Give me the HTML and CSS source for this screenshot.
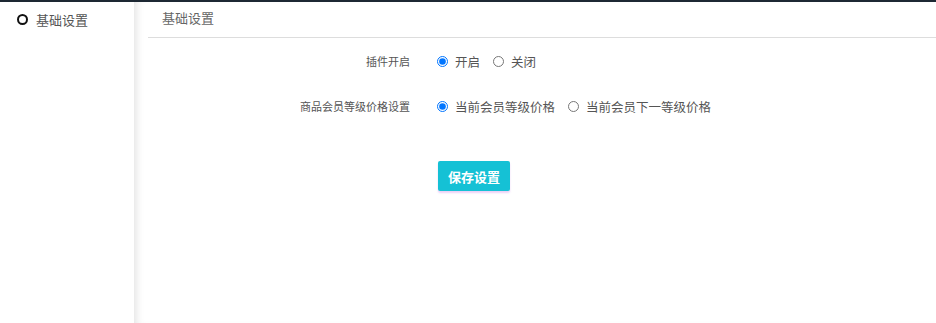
FILE: index.html
```html
<!DOCTYPE html>
<html lang="zh-CN">
<head>
    <meta charset="UTF-8">
    <title>基础设置</title>
    <link rel="stylesheet" href="styles.css">
</head>
<body>
    <div class="page">
        <aside class="sidebar">
            <div class="menu-item"><span class="ring"></span>基础设置</div>
        </aside>
        <main class="main">
            <div class="main-head">基础设置</div>
            <form class="form">
                <div class="row">
                    <label class="row-label">插件开启</label>
                    <div class="row-field">
                        <label class="opt"><input type="radio" name="open" checked>开启</label>
                        <label class="opt"><input type="radio" name="open">关闭</label>
                    </div>
                </div>
                <div class="row">
                    <label class="row-label">商品会员等级价格设置</label>
                    <div class="row-field">
                        <label class="opt"><input type="radio" name="level" checked>当前会员等级价格</label>
                        <label class="opt"><input type="radio" name="level">当前会员下一等级价格</label>
                    </div>
                </div>
                <div class="row actions">
                    <span class="row-label"></span>
                    <div class="row-field">
                        <button type="button" class="btn-save">保存设置</button>
                    </div>
                </div>
            </form>
        </main>
    </div>
</body>
</html>
```

FILE: styles.css
```css
html, body {
    margin: 0;
    padding: 0;
    height: 100%;
    background: #fff;
    font-family: "Liberation Sans", "Noto Sans CJK SC", sans-serif;
    color: #333;
}

.page {
    display: flex;
    height: 100%;
    box-sizing: border-box;
    border-top: 2px solid #1d2833;
}

.sidebar {
    width: 134px;
    flex-shrink: 0;
}

.menu-item {
    display: flex;
    align-items: center;
    padding: 8px 0 0 17px;
    font-size: 13px;
    color: #555;
}

.ring {
    width: 7px;
    height: 7px;
    border: 2px solid #111;
    border-radius: 50%;
    margin-right: 8px;
}

.main {
    flex: 1;
    padding-left: 14px;
    box-shadow: inset 8px 0 8px -6px rgba(0, 0, 0, 0.12);
}

.main-head {
    height: 35px;
    line-height: 34px;
    padding-left: 14px;
    font-size: 13px;
    color: #666;
    border-bottom: 1px solid #ddd;
}

.form {
    padding-top: 12px;
}

.row {
    display: flex;
    align-items: center;
    height: 22px;
    margin-bottom: 23px;
}

.row-label {
    width: 262px;
    text-align: right;
    font-size: 11px;
    color: #555;
}

.row-field {
    display: flex;
    align-items: center;
    padding-left: 22px;
}

.opt {
    display: flex;
    align-items: center;
    font-size: 12.5px;
    color: #555;
    margin-right: 8px;
}

.opt input {
    width: 11px;
    height: 11px;
    margin: 0 7px 0 5px;
}

.actions {
    margin-top: 44px;
    height: 30px;
}

.btn-save {
    margin-left: 6px;
    width: 72px;
    height: 30px;
    border: none;
    border-radius: 2px;
    background: #15c1d5;
    color: #fff;
    font-family: "Liberation Sans", "Noto Sans CJK SC", sans-serif;
    font-size: 13px;
    font-weight: bold;
    box-shadow: 0 2px 2px rgba(200, 120, 230, 0.35);
}
```
